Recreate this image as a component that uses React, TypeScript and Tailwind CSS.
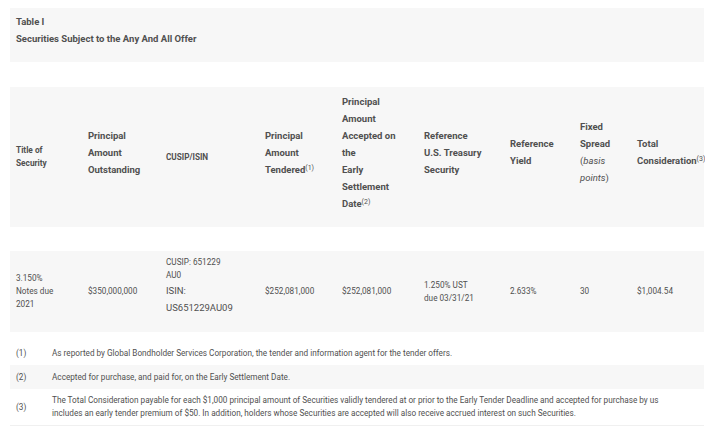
import React from "react";

const cols = "grid grid-cols-[72px_78px_99px_77px_82px_86px_70px_57px_73px]";

function Sup({ n }: { n: string }) {
  return <sup className="text-[7px] font-normal top-[-0.4em]">{n}</sup>;
}

export default function App() {
  return (
    <div
      className="w-[705px] h-[426px] bg-white text-[#505050] overflow-hidden"
      style={{ fontFamily: "Roboto, 'Noto Sans', sans-serif" }}
    >
      <div className="pt-[8px] pl-[10px]">
        {/* title panel */}
        <div className="h-[54px] w-[694px] bg-[#f7f7f7] pl-[6px] pt-[5px] text-[9.5px] font-bold leading-[17px]">
          <div>Table I</div>
          <div>Securities Subject to the Any And All Offer</div>
        </div>

        {/* header row */}
        <div className={`${cols} mt-[25px] h-[140px] w-[694px] bg-[#f7f7f7] items-center font-bold`}>
          <div className="pl-[6px] text-[8.3px] leading-[13px]">
            Title of
            <br />
            Security
          </div>
          <div className="pl-[6px] text-[9.5px] leading-[17px] pb-[10px]">
            Principal
            <br />
            Amount
            <br />
            Outstanding
          </div>
          <div className="pl-[6px] text-[8.2px] leading-[13px]">CUSIP/ISIN</div>
          <div className="pl-[6px] text-[9.5px] leading-[17px] pb-[10px] whitespace-nowrap">
            Principal
            <br />
            Amount
            <br />
            Tendered
            <Sup n="(1)" />
          </div>
          <div className="pl-[6px] text-[9.5px] leading-[17px] pb-[10px] whitespace-nowrap">
            Principal
            <br />
            Amount
            <br />
            Accepted on
            <br />
            the
            <br />
            Early
            <br />
            Settlement
            <br />
            Date
            <Sup n="(2)" />
          </div>
          <div className="pl-[6px] text-[9.5px] leading-[17px] pb-[10px] whitespace-nowrap">
            Reference
            <br />
            U.S. Treasury
            <br />
            Security
          </div>
          <div className="pl-[6px] text-[9.5px] leading-[17px] pb-[10px] whitespace-nowrap">
            Reference
            <br />
            Yield
          </div>
          <div className="pl-[6px] text-[9.5px] leading-[17px] pb-[10px] whitespace-nowrap">
            Fixed
            <br />
            Spread
            <br />
            <span className="font-normal">
              (<i>basis</i>
              <br />
              <i>points</i>)
            </span>
          </div>
          <div className="pl-[6px] text-[9.5px] leading-[17px] pb-[10px] whitespace-nowrap">
            Total
            <br />
            Consideration
            <Sup n="(3)" />
          </div>
        </div>

        {/* data row */}
        <div className={`${cols} mt-[24px] h-[81px] w-[694px] bg-[#f7f7f7] items-center text-[8.2px] leading-[13px]`}>
          <div className="pl-[6px] whitespace-nowrap">
            3.150%
            <br />
            Notes due
            <br />
            2021
          </div>
          <div className="pl-[6px]">$350,000,000</div>
          <div className="pl-[6px] pb-[11px] whitespace-nowrap">
            CUSIP: 651229
            <br />
            AU0
            <div className="text-[9.5px] leading-[17px]">
              ISIN:
              <br />
              US651229AU09
            </div>
          </div>
          <div className="pl-[6px]">$252,081,000</div>
          <div className="pl-[6px]">$252,081,000</div>
          <div className="pl-[6px] whitespace-nowrap">
            1.250% UST
            <br />
            due 03/31/21
          </div>
          <div className="pl-[6px]">2.633%</div>
          <div className="pl-[6px]">30</div>
          <div className="pl-[6px]">$1,004.54</div>
        </div>

        {/* footnotes */}
        <div className="mt-[9px] w-[694px] text-[8.2px] leading-[13px]">
          <div className="flex h-[24px] items-center">
            <div className="w-[36px] pl-[6px]">(1)</div>
            <div className="pl-[6px]">
              As reported by Global Bondholder Services Corporation, the tender and information agent for the tender offers.
            </div>
          </div>
          <div className="flex h-[24px] items-center bg-[#f7f7f7]">
            <div className="w-[36px] pl-[6px]">(2)</div>
            <div className="pl-[6px]">Accepted for purchase, and paid for, on the Early Settlement Date.</div>
          </div>
          <div className="flex h-[37px] items-center border-b border-[#f0f0f0]">
            <div className="w-[36px] pl-[6px]">(3)</div>
            <div className="pl-[6px] whitespace-nowrap">
              The Total Consideration payable for each $1,000 principal amount of Securities validly tendered at or prior to the Early Tender Deadline and accepted for purchase by us
              <br />
              includes an early tender premium of $50. In addition, holders whose Securities are accepted will also receive accrued interest on such Securities.
            </div>
          </div>
        </div>
      </div>
    </div>
  );
}
